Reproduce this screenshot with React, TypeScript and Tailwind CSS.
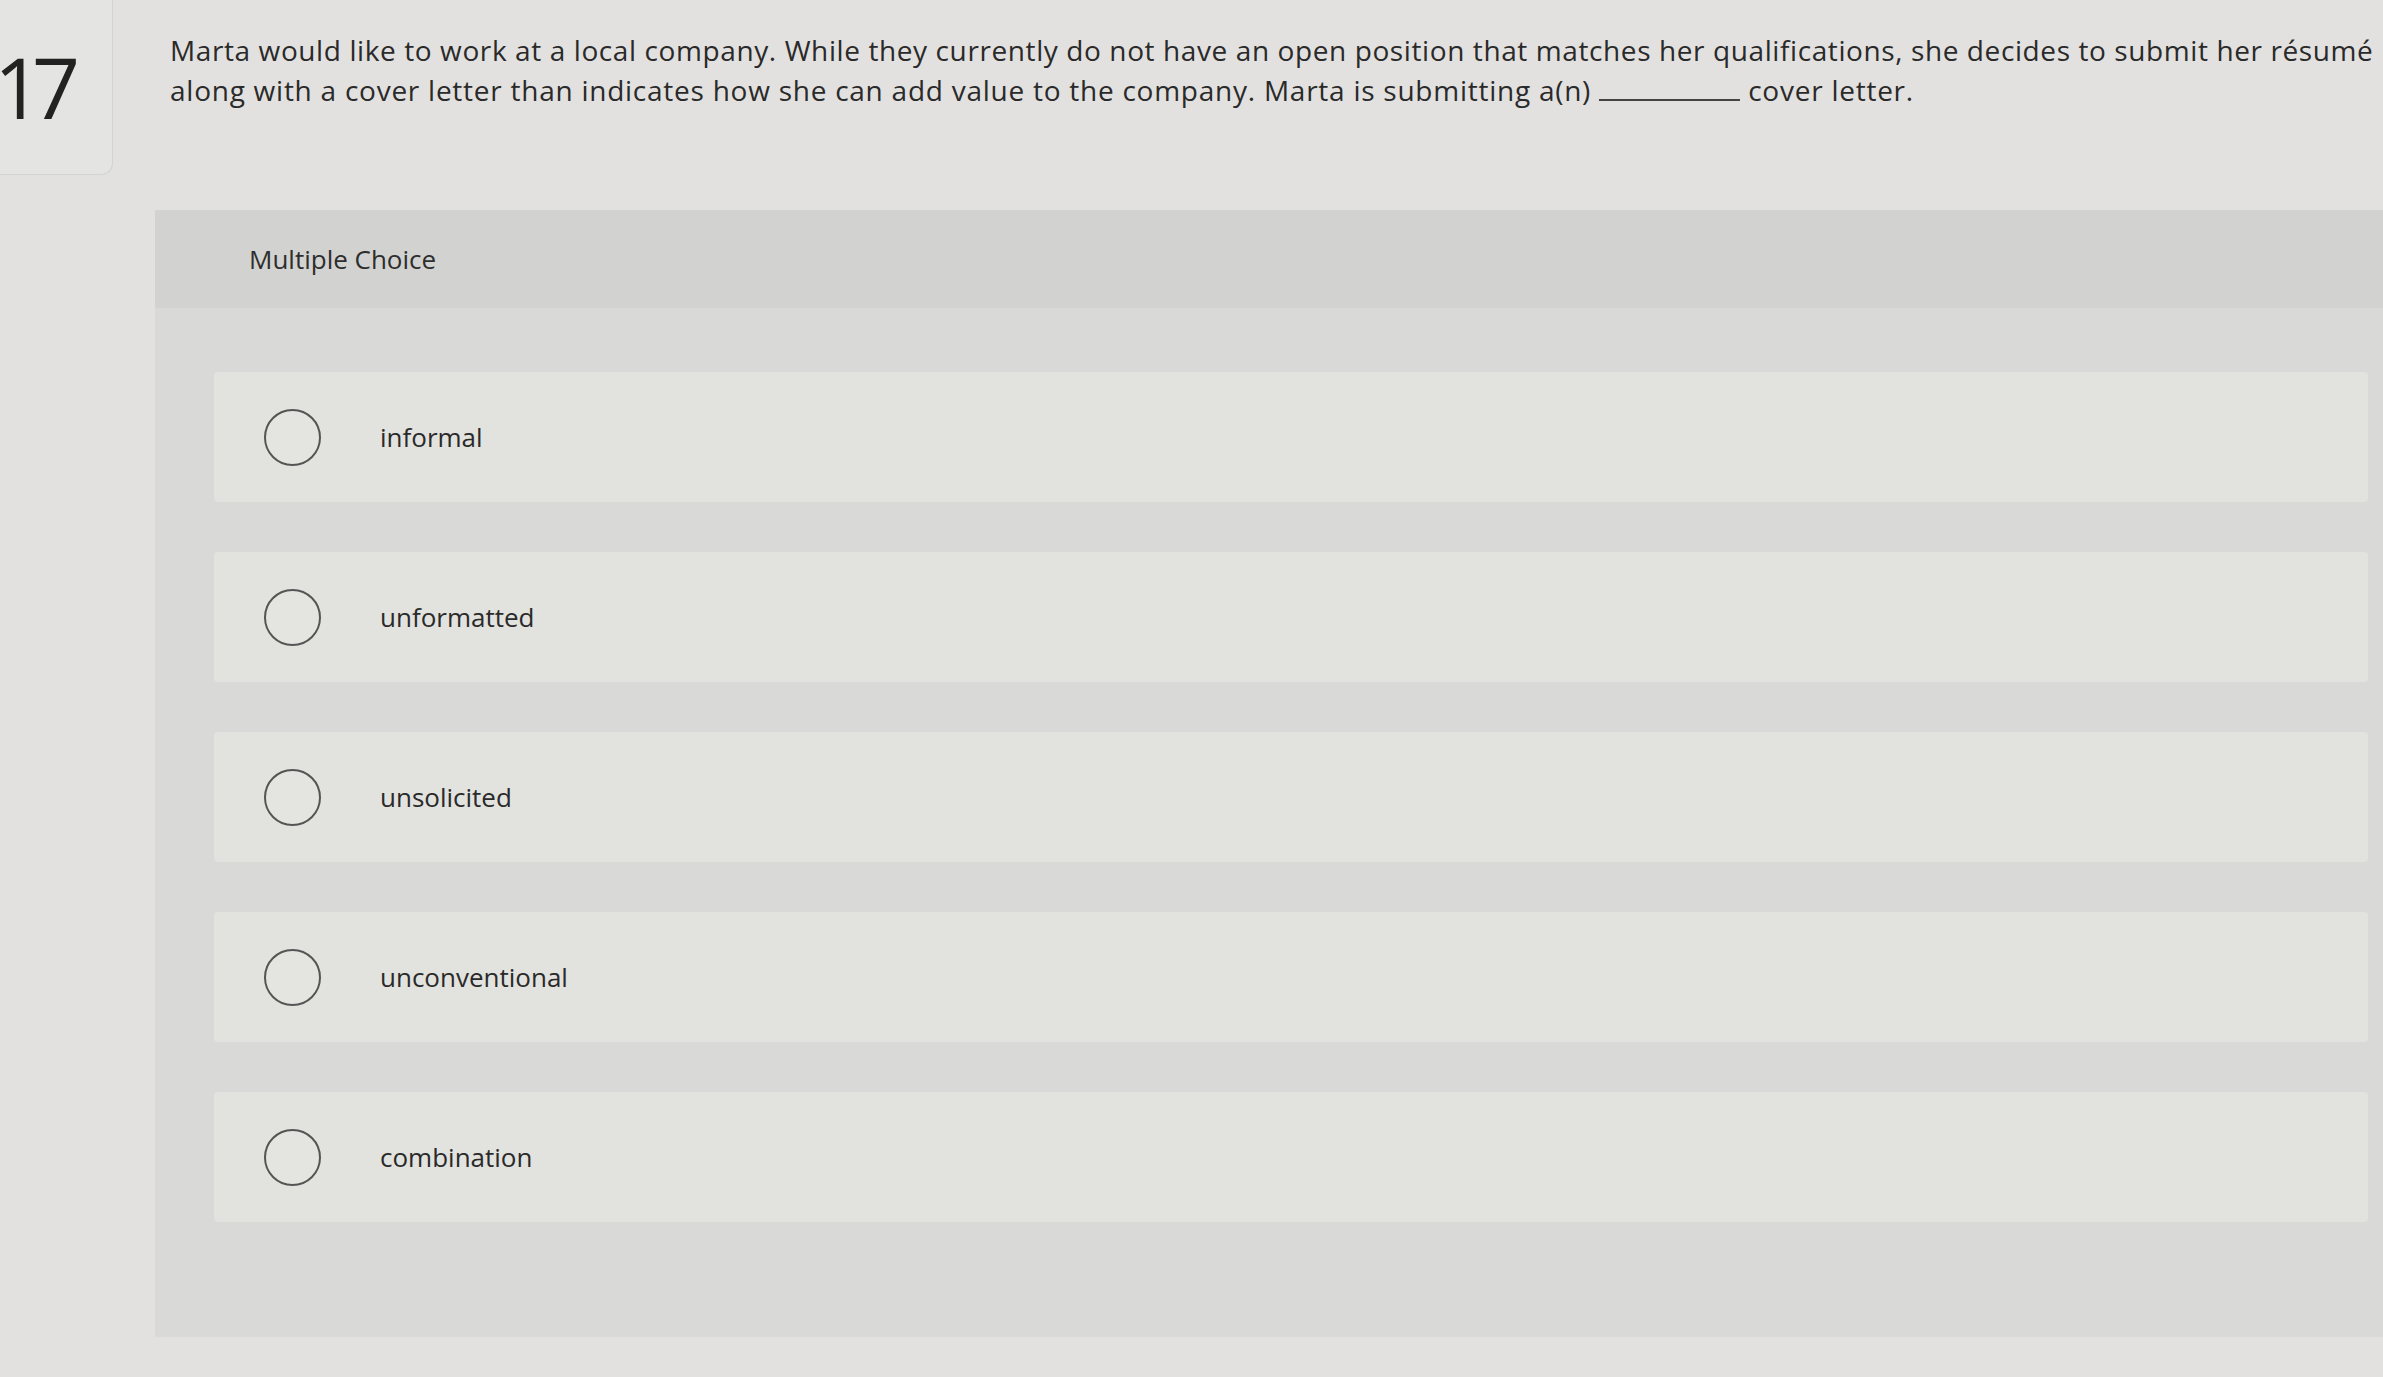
const options = ['informal', 'unformatted', 'unsolicited', 'unconventional', 'combination']

export default function App() {
  return (
    <div
      className="relative h-[1377px] w-[2383px] overflow-hidden bg-[#e2e1df] text-[#2f2f2f]"
      style={{ fontFamily: '"Open Sans", Lato, sans-serif' }}
    >
      <div className="flex">
        <div className="flex h-[175px] w-[113px] shrink-0 items-center overflow-hidden rounded-br-xl border-b border-r border-[#d3d3d1] bg-[#e4e4e2]">
          <span className="-ml-[6px] text-[84px] leading-none tracking-[-10px] text-[#222]">17</span>
        </div>
        <p className="ml-[57px] whitespace-nowrap pt-[30px] text-[28px] leading-[40px] tracking-[0.75px] text-[#2a2a2a]">
          <span className="tracking-[0.6px]">
            Marta would like to work at a local company. While they currently do not have an open position that matches her qualifications, she decides to submit her résumé
          </span>
          <br />
          along with a cover letter than indicates how she can add value to the company. Marta is submitting a(n){' '}
          <span className="inline-block h-[28px] w-[141px] border-b-2 border-[#444] align-baseline" />{' '}
          cover letter.
        </p>
      </div>

      <div className="ml-[155px] mt-[35px] bg-[#d9d9d7]">
        <div className="flex h-[98px] items-center bg-[#d2d2d0] pl-[94px] text-[26px] text-[#2e2e2e]">
          Multiple Choice
        </div>
        <div className="flex flex-col gap-[50px] pb-[115px] pl-[59px] pr-[15px] pt-[64px]">
          {options.map((opt) => (
            <div key={opt} className="flex h-[130px] items-center rounded-sm bg-[#e2e2df] pl-[50px]">
              <span className="h-[57px] w-[57px] shrink-0 rounded-full border-2 border-[#555] bg-[#e4e4e1]" />
              <span className="ml-[59px] text-[26px] text-[#2a2a2a]">{opt}</span>
            </div>
          ))}
        </div>
      </div>
    </div>
  )
}
